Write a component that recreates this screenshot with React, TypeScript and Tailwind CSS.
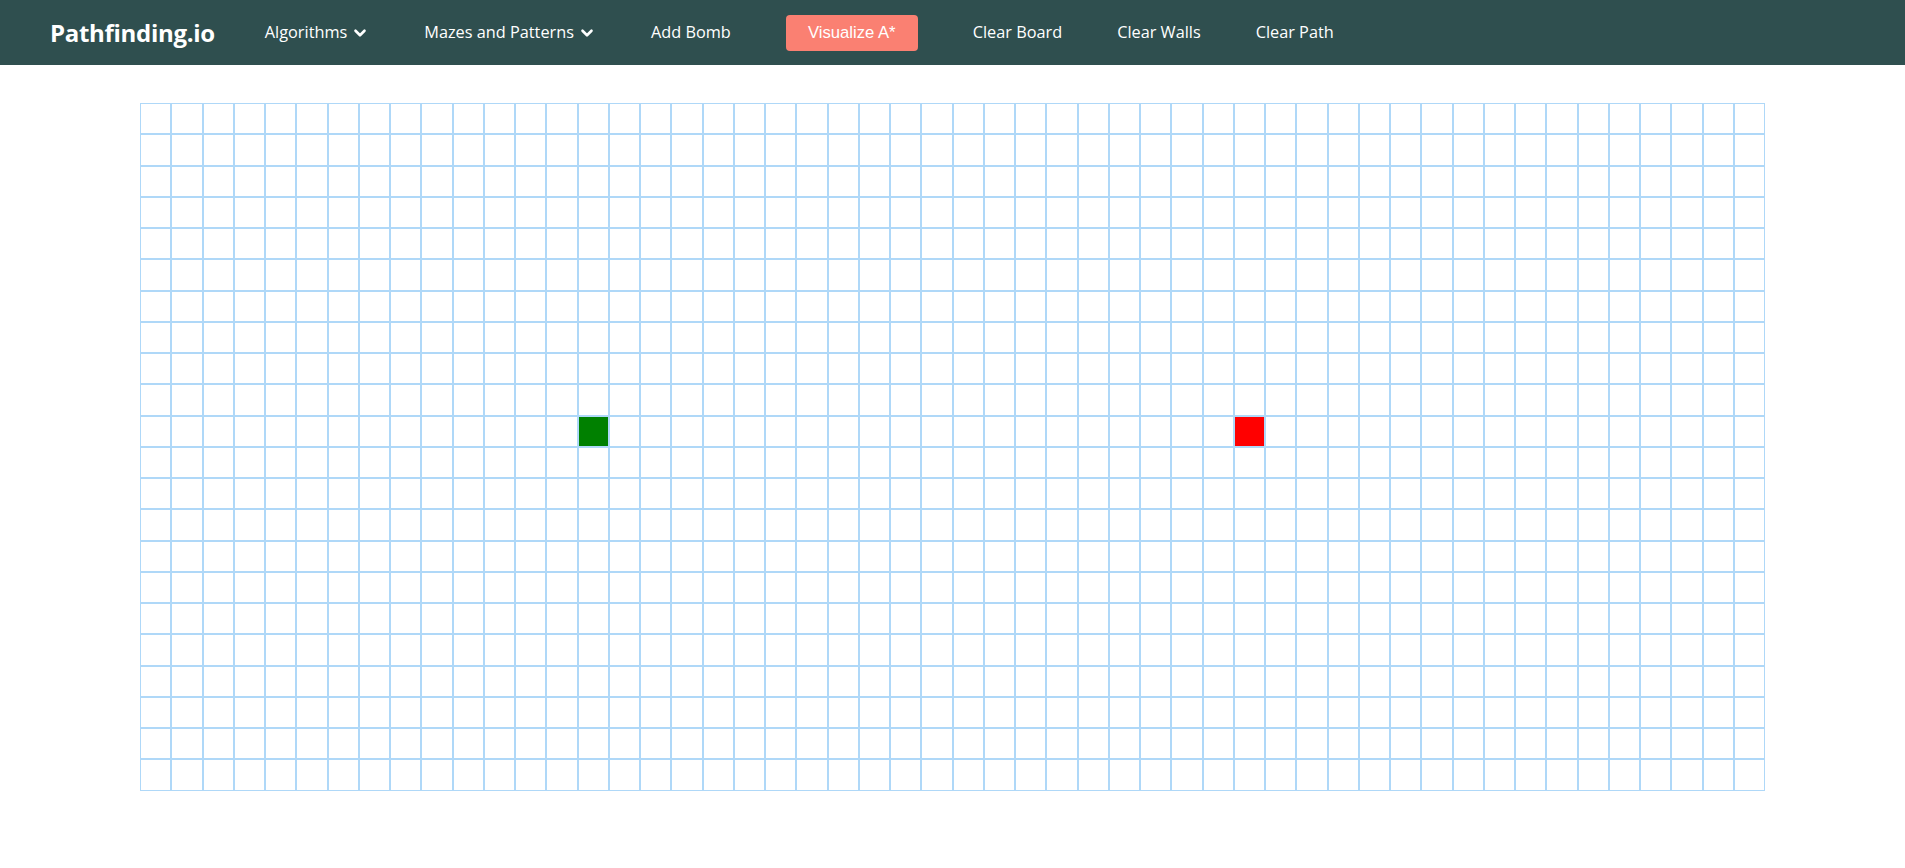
import React from 'react';
import { ChevronDown } from 'lucide-react';

const ROWS = 22;
const COLS = 52;
const START = { row: 10, col: 14 };
const TARGET = { row: 10, col: 35 };

const NavItem: React.FC<{ label: string; dropdown?: boolean }> = ({ label, dropdown }) => (
    <div className="flex items-center text-white cursor-pointer">
        <span>{label}</span>
        {dropdown && <ChevronDown className="ml-[4px] w-[18px] h-[18px]" strokeWidth={3.5} />}
    </div>
);

const Node: React.FC<{ row: number; col: number }> = ({ row, col }) => {
    let fill = 'bg-white';
    if (row === START.row && col === START.col) fill = 'bg-[#008000]';
    if (row === TARGET.row && col === TARGET.col) fill = 'bg-[#ff0000]';
    return <div className={`w-[31.25px] h-[31.25px] border border-[#afd8f8] ${fill}`} />;
};

export default function App() {
    const rows = Array.from({ length: ROWS }, (_, r) => r);
    const cols = Array.from({ length: COLS }, (_, c) => c);

    return (
        <div className="min-h-screen bg-white" style={{ fontFamily: '"Open Sans", "Noto Sans", sans-serif' }}>
            {/* top nav */}
            <nav className="h-[65px] bg-[#2f4f4f] flex items-center pl-[50px] text-[16.3px]">
                <a className="text-white font-bold text-[24px] tracking-[-0.3px] mr-[50px]">Pathfinding.io</a>
                <div className="flex items-center gap-[55px]">
                    <NavItem label="Algorithms" dropdown />
                    <NavItem label="Mazes and Patterns" dropdown />
                    <NavItem label="Add Bomb" />
                    <button
                        className="h-[36px] w-[132px] rounded-[4px] bg-[#fa8072] text-white text-[16.67px]"
                        style={{ fontFamily: '"Liberation Sans", Arial, sans-serif' }}
                    >
                        Visualize A*
                    </button>
                    <NavItem label="Clear Board" />
                    <NavItem label="Clear Walls" />
                    <NavItem label="Clear Path" />
                </div>
            </nav>

            {/* board */}
            <div className="flex justify-center pt-[38px]">
                <div className="flex flex-col">
                    {rows.map((r) => (
                        <div key={r} className="flex">
                            {cols.map((c) => (
                                <Node key={c} row={r} col={c} />
                            ))}
                        </div>
                    ))}
                </div>
            </div>
        </div>
    );
}
